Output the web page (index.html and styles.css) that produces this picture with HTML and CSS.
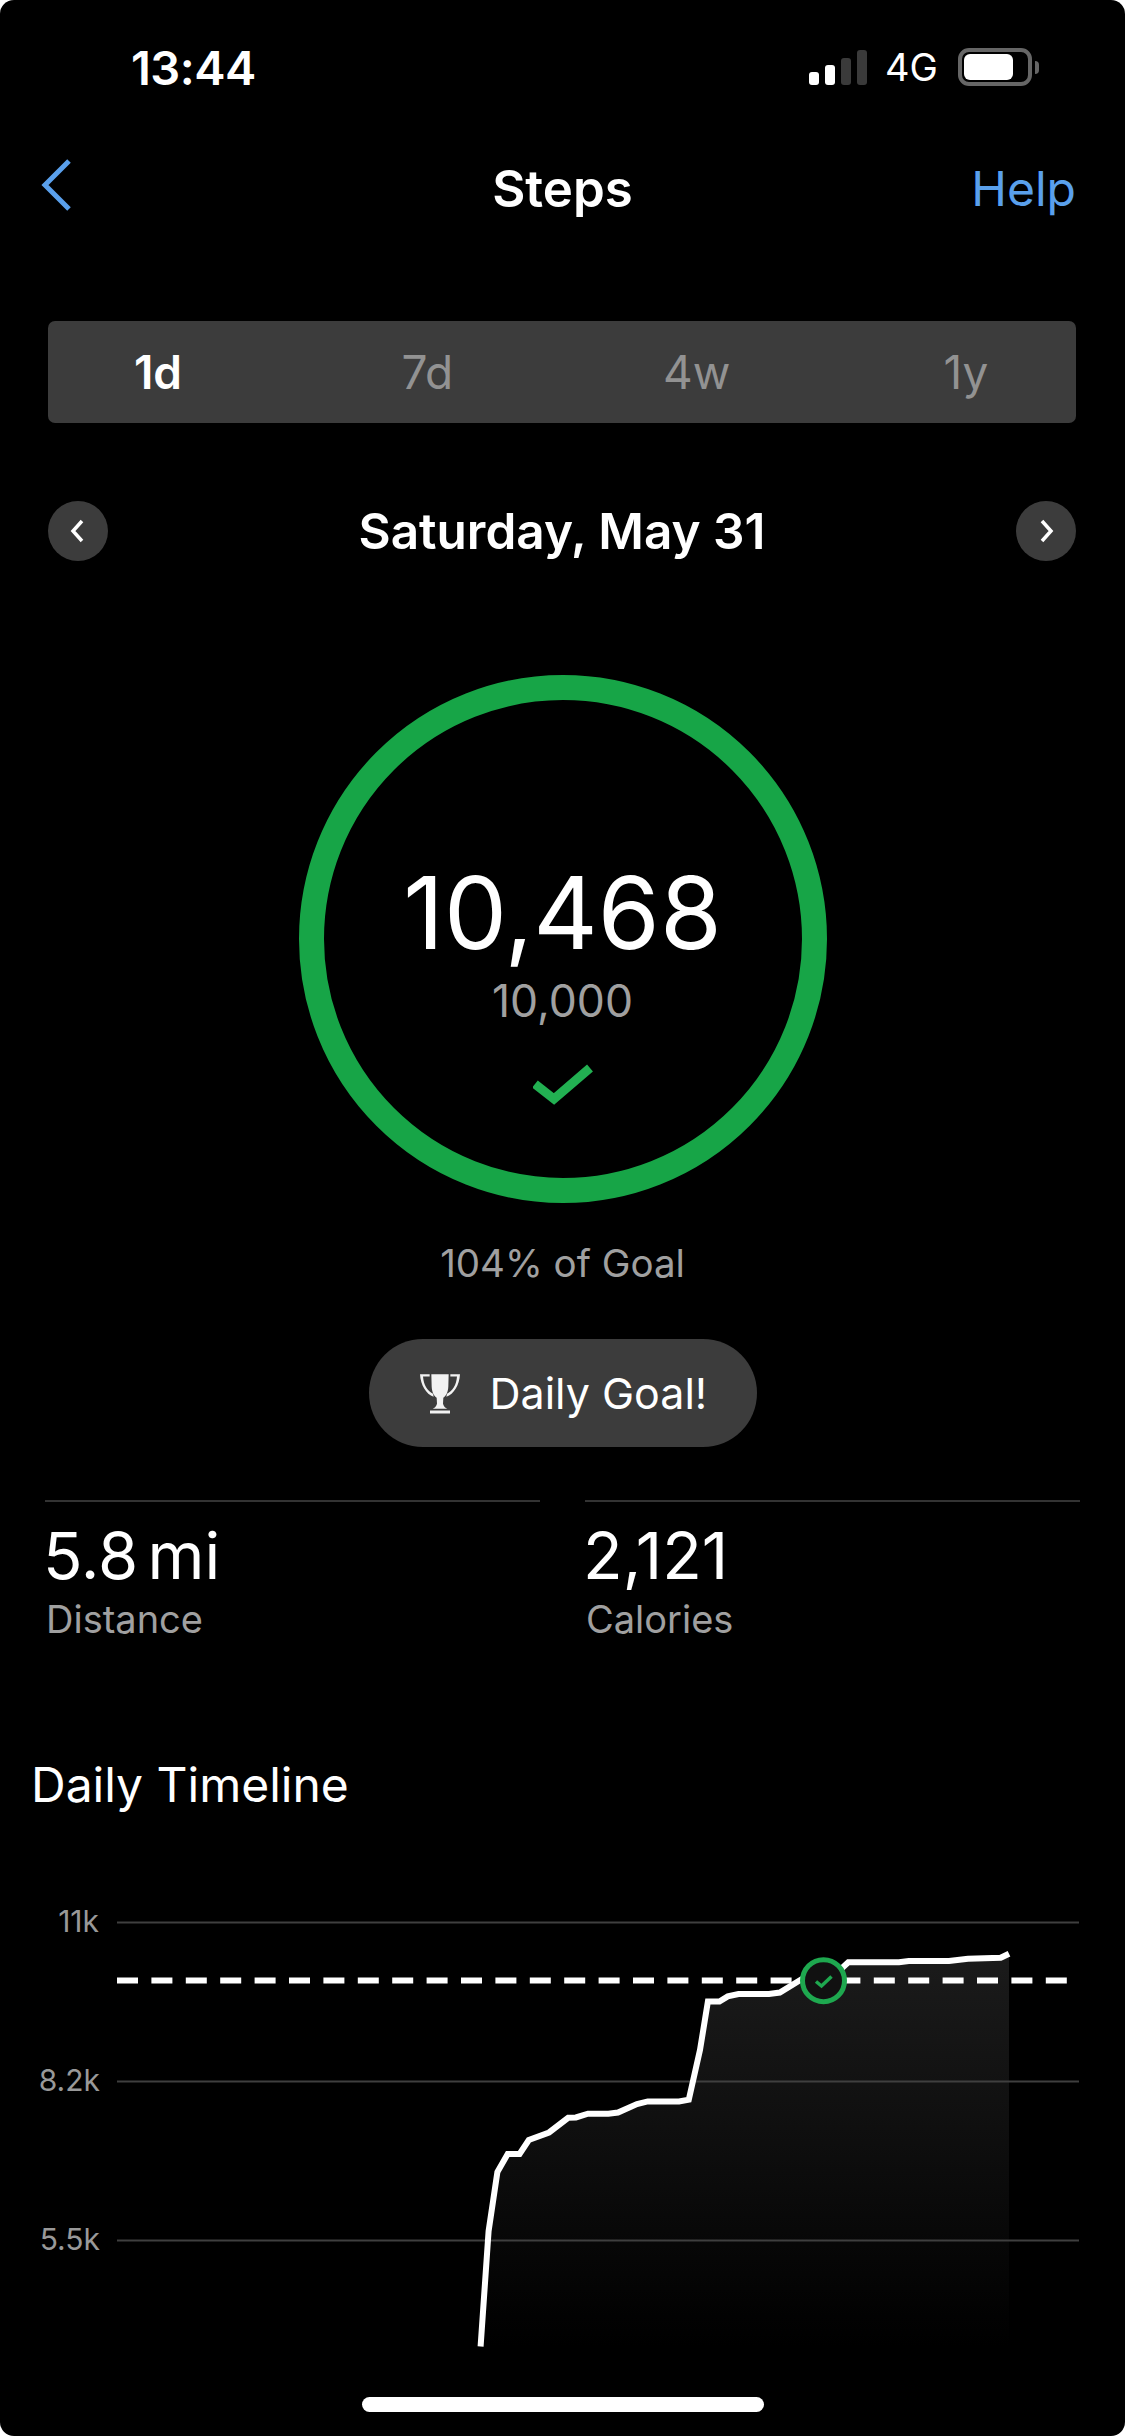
FILE: index.html
```html
<!DOCTYPE html>
<html lang="en">
<head>
<meta charset="utf-8">
<title>Steps</title>
<link rel="stylesheet" href="styles.css">
</head>
<body>
<main class="screen">
  <header class="status">
    <span class="time">13:44</span>
    <div class="status-right">
      <div class="signal"><i class="bar b1"></i><i class="bar b2"></i><i class="bar b3 off"></i><i class="bar b4 off"></i></div>
      <span class="net">4G</span>
      <div class="battery"><div class="battery-body"><div class="battery-fill"></div></div><div class="battery-nub"></div></div>
    </div>
  </header>
  <nav class="navbar">
    <svg class="back" viewBox="0 0 32 52" width="32" height="52"><path d="M30 2 L6 26 L30 50" fill="none" stroke="#5aa0ec" stroke-width="5"/></svg>
    <h1 class="title">Steps</h1>
    <span class="help">Help</span>
  </nav>
  <div class="segment">
    <span class="seg-item active">1d</span>
    <span class="seg-item">7d</span>
    <span class="seg-item">4w</span>
    <span class="seg-item">1y</span>
  </div>
  <div class="date-row">
    <span class="round"><svg viewBox="0 0 60 60" width="60" height="60"><path d="M34 20 L25 30 L34 40" fill="none" stroke="#fff" stroke-width="3.5"/></svg></span>
    <span class="date">Saturday, May 31</span>
    <span class="round"><svg viewBox="0 0 60 60" width="60" height="60"><path d="M26 20 L35 30 L26 40" fill="none" stroke="#fff" stroke-width="3.5"/></svg></span>
  </div>
  <section class="ring">
    <div class="ring-value">10,468</div>
    <div class="ring-goal">10,000</div>
    <svg class="ring-check" viewBox="0 0 60 44" width="60" height="44"><path d="M2 22 L21 37 L57 6" fill="none" stroke="#22b052" stroke-width="9"/></svg>
  </section>
  <p class="pct">104% of Goal</p>
  <div class="pill">
    <svg class="trophy" viewBox="0 0 120 122" width="40" height="41">
      <path fill="#f2f2f2" d="M34 3 H86 L85 40 C84 58 78 68 70 74 L69 92 C71 100 76 104 82 107 H38 C44 104 49 100 51 92 L50 74 C42 68 36 58 35 40 Z"/>
      <path fill="#f2f2f2" d="M0 3 H29 V10 H9 C11 36 22 52 39 62 L41 71 C18 62 2 36 0 3 Z"/>
      <path fill="#f2f2f2" d="M120 3 H91 V10 H111 C109 36 98 52 81 62 L79 71 C102 62 118 36 120 3 Z"/>
      <path fill="#f2f2f2" d="M30 112 H90 V121 H30 Z"/>
    </svg>
    <span class="pill-text">Daily Goal!</span>
  </div>
  <div class="stats">
    <div class="stat"><div class="stat-value">5.8 mi</div><div class="stat-label">Distance</div></div>
    <div class="stat"><div class="stat-value">2,121</div><div class="stat-label">Calories</div></div>
  </div>
  <h2 class="section-title">Daily Timeline</h2>
  <svg class="chart" viewBox="0 1880 1125 500" width="1125" height="500">
    <defs>
      <linearGradient id="area" x1="0" y1="0" x2="0" y2="1">
        <stop offset="0" stop-color="#1b1b1b"/>
        <stop offset="1" stop-color="#000"/>
      </linearGradient>
    </defs>
    <path fill="url(#area)" d="M480.6 2346.5 L488.6 2231 L497.4 2172 L507.7 2154 L519.6 2154 L528.8 2140 L549 2132.5 L568.2 2117.8 L575.9 2117.4 L588 2113.7 L608.4 2113.7 L618 2112.6 L637 2104 L647.8 2101.4 L679 2101.4 L688.8 2099.7 L700 2050 L707.9 2001.5 L719.4 2001.5 L727.8 1996.4 L738.5 1994 L769 1994 L779.8 1992.6 L801.6 1979.3 L848.3 1962.2 L899 1962.2 L908.8 1961 L949 1961 L968 1958.8 L1000.7 1957.8 L1009 1953.7 V2346.5 Z"/>
    <line class="grid" x1="117" y1="1922.5" x2="1079" y2="1922.5"/>
    <line class="grid" x1="117" y1="2081.5" x2="1079" y2="2081.5"/>
    <line class="grid" x1="117" y1="2240.5" x2="1079" y2="2240.5"/>
    <text class="axis" x="99" y="1932">11k</text>
    <text class="axis" x="100" y="2091">8.2k</text>
    <text class="axis" x="100" y="2250">5.5k</text>
    <line class="goal" x1="117" y1="1980.5" x2="1076" y2="1980.5"/>
    <path class="curve" d="M480.6 2346.5 L488.6 2231 L497.4 2172 L507.7 2154 L519.6 2154 L528.8 2140 L549 2132.5 L568.2 2117.8 L575.9 2117.4 L588 2113.7 L608.4 2113.7 L618 2112.6 L637 2104 L647.8 2101.4 L679 2101.4 L688.8 2099.7 L700 2050 L707.9 2001.5 L719.4 2001.5 L727.8 1996.4 L738.5 1994 L769 1994 L779.8 1992.6 L801.6 1979.3 L830 1979.3 L848.3 1962.2 L899 1962.2 L908.8 1961 L949 1961 L968 1958.8 L1000.7 1957.8 L1009 1953.7"/>
    <circle class="marker" cx="823.5" cy="1980.7" r="21"/>
    <path class="marker-check" d="M816 1981.5 L821.5 1986 L831.5 1976.5"/>
  </svg>
  <div class="home"></div>
</main>
</body>
</html>
```
FILE: styles.css
```css
* { box-sizing: border-box; }
html, body { margin: 0; padding: 0; background: #fff; }
.screen {
  width: 1125px; height: 2436px; background: #000; color: #fff;
  border-radius: 14px; overflow: hidden; position: relative;
  display: flex; flex-direction: column;
  font-family: Inter, "Liberation Sans", sans-serif;
}
.status { height: 134px; display: flex; justify-content: space-between; align-items: center; padding: 0 86px 0 131px; }
.time { font-size: 47px; font-weight: 600; letter-spacing: -0.5px; }
.status-right { display: flex; align-items: center; }
.signal { display: flex; align-items: flex-end; gap: 6px; height: 35px; }
.bar { display: block; width: 10px; background: #fff; border-radius: 3px; }
.b1 { height: 13px; } .b2 { height: 20px; } .b3 { height: 27px; } .b4 { height: 35px; }
.bar.off { background: #3a3a3a; }
.net { font-size: 38px; font-weight: 400; margin-left: 18px; width: 53px; }
.battery { display: flex; align-items: center; margin-left: 20px; }
.battery-body { width: 74px; height: 38px; border: 4px solid #666; border-radius: 11px; padding: 2px; }
.battery-fill { width: 49px; height: 100%; background: #fff; border-radius: 6px; }
.battery-nub { width: 4px; height: 13px; margin-left: 3px; background: #666; border-radius: 0 4px 4px 0; }
.navbar { height: 108px; margin-bottom: 2px; display: flex; align-items: center; justify-content: space-between; padding: 0 49px 0 39px; position: relative; }
.back { margin-bottom: 6px; }
.title { margin: 0; font-size: 51px; font-weight: 600; position: absolute; left: 0; right: 0; text-align: center; }
.help { font-size: 48px; color: #5aa0ec; }
.segment { margin: 77px 49px 0 48px; height: 102px; background: #3c3c3c; border-radius: 7px; display: flex; justify-content: space-between; align-items: center; padding: 0 60px; }
.seg-item { width: 100px; text-align: center; font-size: 46px; color: #929292; }
.seg-item.active { color: #fff; font-weight: 600; }
.date-row { margin: 78px 49px 0 48px; height: 60px; display: flex; align-items: center; justify-content: space-between; }
.round { width: 60px; height: 60px; border-radius: 50%; background: #3c3c3c; display: block; }
.round svg { display: block; }
.date { font-size: 49.5px; font-weight: 600; }
.ring { margin: 114px auto 0; width: 528px; height: 528px; border: 25px solid #17a547; border-radius: 50%; display: flex; flex-direction: column; align-items: center; padding-top: 168px; }
.ring-value { font-size: 100px; line-height: 90px; }
.ring-goal { font-size: 44.5px; line-height: 50px; color: #a0a0a0; margin-top: 18px; }
.ring-check { display: block; margin-top: 36px; }
.pct { margin: 36px 0 0; text-align: center; font-size: 38.5px; line-height: 48px; color: #a0a0a0; }
.pill { margin: 52px auto 0; width: 388px; height: 108px; border-radius: 54px; background: #3c3c3c; display: flex; align-items: center; padding-left: 51px; gap: 30px; }
.trophy { display: block; }
.pill-text { font-size: 43px; }
.stats { margin: 53px 45px 0; display: grid; grid-template-columns: 495px 495px; column-gap: 45px; }
.stat { border-top: 2px solid #333; padding-top: 16px; }
.stat-value { font-size: 65px; line-height: 76px; margin-left: -2px; word-spacing: -9px; }
.stat-label { font-size: 38px; line-height: 46px; color: #a0a0a0; margin-top: 2px; padding-left: 1px; }
.section-title { margin: 113px 0 0 31px; font-size: 48px; font-weight: 400; line-height: 60px; }
.chart { position: absolute; left: 0; top: 1880px; display: block; }
.grid { stroke: #3f3f3f; stroke-width: 2; }
.axis { fill: #999; font-size: 30px; text-anchor: end; font-family: Inter, "Liberation Sans", sans-serif; }
.goal { stroke: #fff; stroke-width: 6; stroke-dasharray: 21 13.4; }
.curve { fill: none; stroke: #fff; stroke-width: 6; }
.marker { fill: #111; stroke: #1ea84f; stroke-width: 5; }
.marker-check { fill: none; stroke: #1ea84f; stroke-width: 3.5; }
.home { position: absolute; left: 362px; top: 2397px; width: 402px; height: 15px; border-radius: 8px; background: #fff; }
```
